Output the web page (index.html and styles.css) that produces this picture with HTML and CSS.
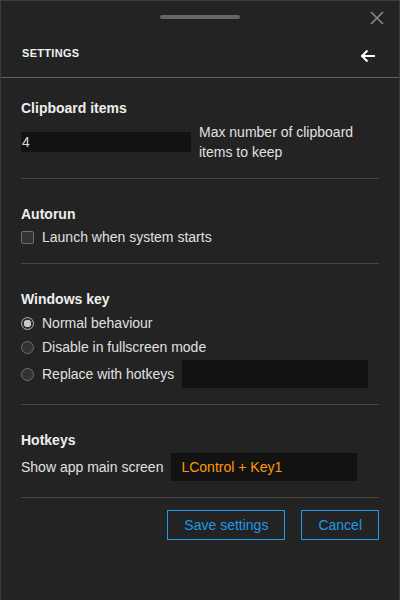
FILE: index.html
```html
<!DOCTYPE html>
<html>
<head>
<meta charset="utf-8">
<link rel="stylesheet" href="styles.css">
</head>
<body>
<div class="window">
  <div class="topbar">
    <div class="handle"></div>
    <svg class="close" width="14" height="14" viewBox="0 0 14 14"><path d="M1 1L13 13M13 1L1 13" stroke="#8a8a8a" stroke-width="1.6" fill="none"/></svg>
  </div>
  <div class="header">
    <span class="title">SETTINGS</span>
    <svg class="back" width="16" height="14" viewBox="0 0 16 14"><path d="M15 7H2M7.5 1.5L2 7l5.5 5.5" stroke="#fff" stroke-width="2" fill="none"/></svg>
  </div>
  <div class="content">
    <section class="section first">
      <h2>Clipboard items</h2>
      <div class="row clip-row">
        <div class="input num">4</div>
        <div class="hint">Max number of clipboard<br>items to keep</div>
      </div>
    </section>
    <section class="section">
      <h2>Autorun</h2>
      <label class="row option"><span class="checkbox"></span>Launch when system starts</label>
    </section>
    <section class="section">
      <h2>Windows key</h2>
      <label class="row option r1"><span class="radio checked"></span>Normal behaviour</label>
      <label class="row option r2"><span class="radio"></span>Disable in fullscreen mode</label>
      <label class="row option r3"><span class="radio"></span>Replace with hotkeys<span class="input wide"></span></label>
    </section>
    <section class="section">
      <h2>Hotkeys</h2>
      <div class="row option hk"><span>Show app main screen</span><span class="input wide hotkey">LControl + Key1</span></div>
    </section>
    <div class="footer">
      <button class="btn">Save settings</button>
      <button class="btn">Cancel</button>
    </div>
  </div>
</div>
</body>
</html>
```

FILE: styles.css
```css
html, body {
  margin: 0;
  padding: 0;
  background: #232323;
}
body {
  font-family: "Liberation Sans", Arial, sans-serif;
  font-size: 14px;
  color: #e0e0e0;
}
.window {
  width: 400px;
  height: 600px;
  box-sizing: border-box;
  border: 1px solid #3c3c3c;
  border-bottom: none;
  background: #232323;
}
.topbar {
  height: 34px;
  position: relative;
  display: flex;
  justify-content: center;
}
.handle {
  width: 80px;
  height: 4px;
  margin-top: 14px;
  border-radius: 2px;
  background: #666;
}
.close {
  position: absolute;
  right: 15px;
  top: 10px;
}
.header {
  height: 42px;
  border-bottom: 1px solid #5b5f66;
  display: flex;
  align-items: center;
  justify-content: space-between;
  padding: 0 23px 0 21px;
}
.title {
  font-weight: bold;
  font-size: 11px;
  letter-spacing: 0.3px;
  color: #f0f0f0;
  margin-bottom: 7px;
}
.back {
  margin-top: 0;
}
.content {
  padding: 0 20px;
}
.section {
  padding: 27px 0 16px;
  border-bottom: 1px solid #474747;
}
.section.first {
  padding-top: 22px;
}
h2 {
  margin: 0 0 5px;
  font-size: 14px;
  line-height: 16px;
  font-weight: bold;
  color: #eee;
}
.row {
  display: flex;
  align-items: center;
}
.clip-row {
  margin-top: 6px;
}
.input {
  background: #121212;
  box-sizing: border-box;
}
.num {
  width: 170px;
  height: 20px;
  line-height: 20px;
  padding-left: 1px;
  color: #ddd;
}
.hint {
  margin-left: 8px;
  line-height: 20px;
}
.option {
  line-height: 20px;
}
.r1 { margin-top: 6px; }
.r2 { margin-top: 4px; }
.r3 { margin-top: 3px; }
.checkbox, .radio {
  width: 13px;
  height: 13px;
  box-sizing: border-box;
  border: 1px solid #6e6e6e;
  background: #333;
  margin-right: 8px;
  flex: none;
}
.checkbox {
  border-radius: 2px;
}
.radio {
  border-radius: 50%;
}
.radio.checked {
  border-color: #b0b0b0;
  background: radial-gradient(circle, #c8c8c8 0 3.5px, #2e2e2e 4px);
}
.wide {
  width: 186px;
  height: 28px;
  margin-left: 8px;
}
.hotkey {
  display: flex;
  align-items: center;
  padding-left: 10px;
  color: #ff9a00;
}
.hk {
  margin-top: 5px;
}
.footer {
  display: flex;
  justify-content: flex-end;
  gap: 16px;
  padding-top: 12px;
}
.btn {
  height: 30px;
  padding: 0 16px;
  border: 1px solid #1e9ae6;
  background: transparent;
  color: #1e9ae6;
  font-family: "Liberation Sans", Arial, sans-serif;
  font-size: 14px;
}
```
